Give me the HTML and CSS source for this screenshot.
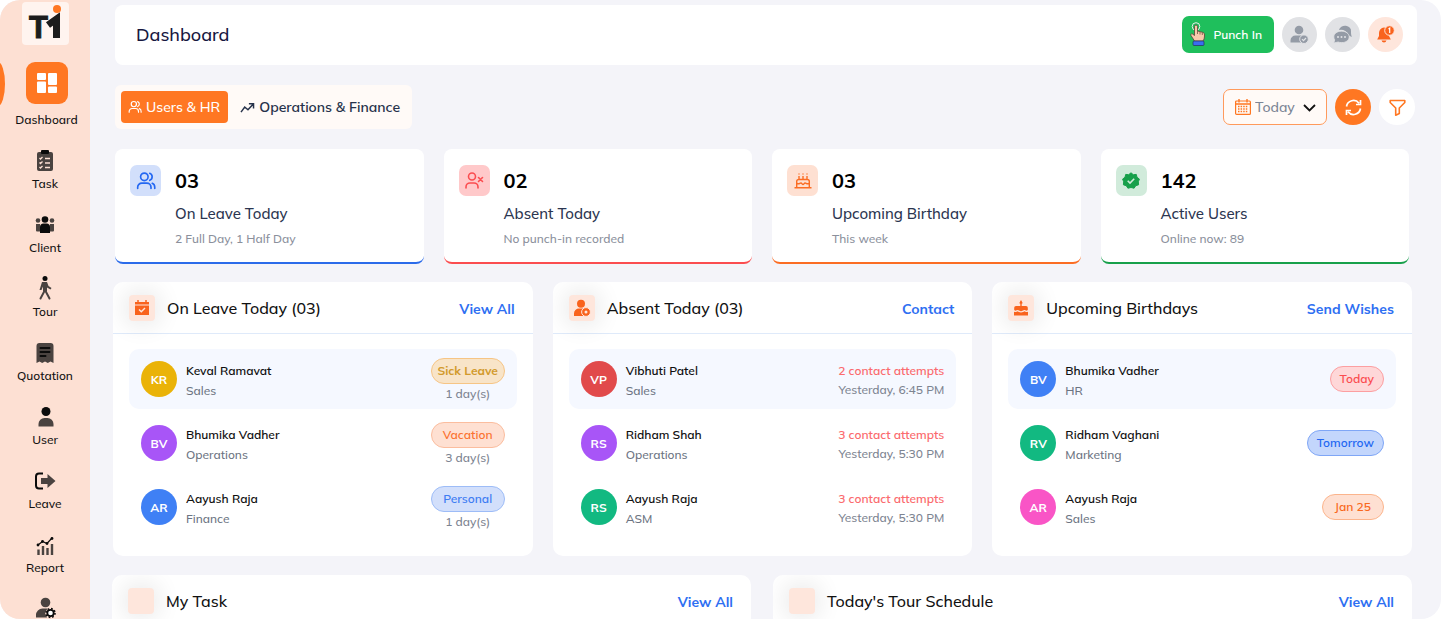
FILE: index.html
```html
<!DOCTYPE html>
<html lang="en">
<head>
    <meta charset="UTF-8">
    <meta name="viewport" content="width=device-width, initial-scale=1.0">
    <title>Dashboard</title>
    <link rel="stylesheet" href="styles.css">
</head>
<body>
    <!-- Icons used more than once -->
    <svg class="sprite" aria-hidden="true">
        <symbol id="icon-users" viewBox="0 0 24 24">
            <g fill="none" stroke="currentColor" stroke-width="2" stroke-linecap="round">
                <circle cx="10" cy="7" r="4.500"/>
                <path d="M2 21v-1.500a5 5 0 0 1 5-5h6a5 5 0 0 1 5 5V21M16.500 2.800a4.500 4.500 0 0 1 0 8.400M19.500 14.800a5 5 0 0 1 3 4.700V21"/>
            </g>
        </symbol>
    </svg>

    <div class="app">
        <aside class="sidebar">
            <a class="logo" href="#" aria-label="Home">
                <svg width="47" height="43" viewBox="0 0 47 43">
                    <text x="7" y="36" class="logo-text">T</text>
                    <!-- figure with a raised arm -->
                    <path d="M34.500 36V17l-8.500 6" fill="none" stroke="#1c1c1c" stroke-width="7"/>
                    <circle cx="35" cy="7" r="4" fill="#ff7722"/>
                </svg>
            </a>
            <nav>
                <a class="nav-item active" href="#">
                    <span class="nav-icon">
                        <svg width="22" height="22" viewBox="0 0 22 22" fill="#fff"><rect x="1" y="1" width="9" height="7" rx="1"/><rect x="1" y="9.500" width="9" height="11.500" rx="1"/><rect x="12" y="1" width="9" height="12" rx="1"/><rect x="12" y="14.500" width="9" height="6.500" rx="1"/></svg>
                    </span>
                    Dashboard
                </a>
                <a class="nav-item" href="#">
                    <svg width="22" height="22" viewBox="0 0 22 22"><rect x="3" y="2" width="16" height="19" rx="2" fill="#4a4340"/><rect x="7" y="0" width="8" height="4" rx="1" fill="#0b0b0b"/><path d="M5.500 8l1 1 2-2M5.500 12.500l1 1 2-2M5.500 17l1 1 2-2M11 8.500h5M11 13h5M11 17.500h5" stroke="#fde0d3" stroke-width="1.300" fill="none"/></svg>
                    Task
                </a>
                <a class="nav-item" href="#">
                    <svg width="22" height="22" viewBox="0 0 22 22"><g fill="#4a4340"><circle cx="4" cy="6.500" r="2.300"/><circle cx="18" cy="6.500" r="2.300"/><path d="M2 10h4v7.500H3a1 1 0 0 1-1-1zM16 10h4v6.500a1 1 0 0 1-1 1h-3z"/></g><circle cx="11" cy="5.500" r="3.300" fill="#0b0b0b"/><path d="M6 19v-6a3.500 3.500 0 0 1 3.500-3.500h3A3.500 3.500 0 0 1 16 13v6z" fill="#0b0b0b"/></svg>
                    Client
                </a>
                <a class="nav-item" href="#">
                    <svg width="22" height="24" viewBox="0 0 22 24"><circle cx="11" cy="2.500" r="2.500" fill="#0b0b0b"/><path d="M11 7v7l-4.500 8.500M11 14l4.500 8.500" stroke="#4a4340" stroke-width="2" fill="none" stroke-linecap="round"/><path d="M8 6h5l1.500 4 3 2-1 1.500-3.500-2v4H9v-5l-1.500 3.500H5.500z" fill="#4a4340"/></svg>
                    Tour
                </a>
                <a class="nav-item" href="#">
                    <svg width="22" height="22" viewBox="0 0 22 22"><path d="M2.500 4a3 3 0 0 1 3-3h11a3 3 0 0 1 3 3v17l-3-1.500-2.700 1.500-2.800-1.500L8.200 21l-2.700-1.500-3 1.500z" fill="#4a4340"/><path d="M6.500 6h9M6.500 10h9M6.500 14h5" stroke="#0b0b0b" stroke-width="2" stroke-linecap="round"/></svg>
                    Quotation
                </a>
                <a class="nav-item" href="#">
                    <svg width="22" height="22" viewBox="0 0 22 22"><circle cx="12" cy="5.500" r="4.500" fill="#0b0b0b"/><path d="M4.500 20.500V18a6 6 0 0 1 6-6h3a6 6 0 0 1 6 6v2.500z" fill="#4a4340"/></svg>
                    User
                </a>
                <a class="nav-item" href="#">
                    <svg width="22" height="22" viewBox="0 0 22 22"><path d="M9 3.500H5a3 3 0 0 0-3 3v9a3 3 0 0 0 3 3h4" stroke="#0b0b0b" stroke-width="2" fill="none"/><path d="M7 8h6.500V4l8 7-8 7v-4H7z" fill="#4a4340"/></svg>
                    Leave
                </a>
                <a class="nav-item" href="#">
                    <svg width="22" height="22" viewBox="0 0 22 22"><path d="M4.500 21v-5.500M9 21v-9M13.500 21v-7M18 21V10" stroke="#4a4340" stroke-width="2.400"/><path d="M4 11l4.500-3.500 4.500 2 5-5.500" stroke="#0b0b0b" stroke-width="1.200" fill="none"/><g fill="#0b0b0b"><circle cx="4" cy="11" r="1.400"/><circle cx="8.500" cy="7.500" r="1.400"/><circle cx="13" cy="9.500" r="1.400"/><circle cx="18" cy="4.500" r="1.400"/></g></svg>
                    Report
                </a>
                <a class="nav-item" href="#" aria-label="Account settings">
                    <svg width="22" height="22" viewBox="0 0 22 22"><circle cx="11.500" cy="5.500" r="4.800" fill="#4a4340"/><path d="M2 20.500V18a6.500 6.500 0 0 1 6.500-6.500h5L11 16l2 4.500z" fill="#4a4340"/><circle cx="16.500" cy="16" r="3.200" fill="#fff" stroke="#0b0b0b" stroke-width="1.800"/><circle cx="16.500" cy="16" r="4.500" fill="none" stroke="#0b0b0b" stroke-width="1.600" stroke-dasharray="1.700 1.830"/></svg>
                </a>
            </nav>
        </aside>

        <main>
            <header class="topbar">
                <h1>Dashboard</h1>
                <div class="topbar-actions">
                    <button class="punch" type="button">
                        <svg width="16" height="24" viewBox="0 0 16 24"><circle cx="6" cy="4.500" r="3.800" fill="none" stroke="#e9e9e9" stroke-width="1"/><path d="M4.500 4.500a1.500 1.500 0 0 1 3 0V9l5 1.300c1.500.400 2 1.200 2 2.700 0 3-.500 4.500-1.500 6h-8.500L1 13.500c-.500-1.500.500-2 1.500-1.500l2 1.500z" fill="#f8c9ab" stroke="#5b4334" stroke-width=".8"/><path d="M7.500 9v3M10 10v2.500M12.300 10.500v2.500" stroke="#5b4334" stroke-width=".7"/><rect x="3" y="19" width="11" height="4.500" rx="1" fill="#3a6df0" stroke="#22315c" stroke-width=".7"/></svg>
                        Punch In
                    </button>
                    <button class="round grey" type="button" aria-label="Attendance">
                        <svg width="19" height="19" viewBox="0 0 19 19"><circle cx="9" cy="5" r="4.300" fill="#949ba6"/><path d="M.500 17.500V15.500a5 5 0 0 1 5-5h6a5 5 0 0 1 4 2V17.500z" fill="#949ba6"/><circle cx="14" cy="14.200" r="4.300" fill="#949ba6" stroke="#e1e2e5" stroke-width="1"/><path d="M12 14.200l1.500 1.500 2.500-2.700" stroke="#e1e2e5" stroke-width="1.200" fill="none"/></svg>
                    </button>
                    <button class="round grey" type="button" aria-label="Messages">
                        <svg width="19" height="19" viewBox="0 0 19 19"><path d="M6 5a6 5 0 0 1 12 1.500c0 1.800 0 3 .800 5.500l-3-1.500A8 7 0 0 0 6 5z" fill="#949ba6"/><path d="M8.500 6.200c4.500 0 7.700 2.400 7.700 5.700s-3.200 5.700-7.500 5.700c-1.500 0-2.500-.200-3.500-.600L.800 18l.900-3.200A5.500 5.500 0 0 1 .800 12c0-3.500 3.300-5.800 7.700-5.800z" fill="#949ba6" stroke="#e1e2e5" stroke-width=".8"/><g fill="#e1e2e5"><circle cx="5" cy="12" r="1"/><circle cx="8.500" cy="12" r="1"/><circle cx="12" cy="12" r="1"/></g></svg>
                    </button>
                    <button class="round peach" type="button" aria-label="Notifications">
                        <svg width="19" height="19" viewBox="0 0 19 19"><path d="M8 2.500a5.500 5.500 0 0 0-5 5.500v3L1.200 14.500h13.600L13 11V8a5.500 5.500 0 0 0-5-5.500zM5.500 15.500a2.600 2.600 0 0 0 5 0z" fill="#f9631d"/><circle cx="13.500" cy="5.500" r="4.800" fill="#f9631d" stroke="#fee6dc" stroke-width="1"/><path d="M12.500 4l1.200-.800v4.800" stroke="#fff" stroke-width="1.200" fill="none"/></svg>
                    </button>
                </div>
            </header>

            <div class="toolbar">
                <div class="tabs">
                    <button class="tab active" type="button">
                        <svg width="14" height="14"><use href="#icon-users"/></svg>
                        Users &amp; HR
                    </button>
                    <button class="tab" type="button">
                        <svg width="15" height="13" viewBox="0 0 16 14" fill="none" stroke="currentColor" stroke-width="1.600"><path d="M1 12l4-5.500 3.500 3L14 3.500M9.500 3h5v5"/></svg>
                        Operations &amp; Finance
                    </button>
                </div>
                <div class="filters">
                    <div class="period">
                        <svg class="period-icon" width="16" height="16" viewBox="0 0 16 16"><rect x=".6" y="2" width="14.800" height="13.400" rx="1" fill="none" stroke="#ff7722" stroke-width="1.200"/><path d="M.6 5h14.800M4 0v3.500M12 0v3.500" stroke="#ff7722" stroke-width="1.400"/><path d="M3 7.500h10M3 10h10M3 12.500h10" stroke="#ff7722" stroke-width="1.500" stroke-dasharray="1.500 1.100"/></svg>
                        <select aria-label="Period">
                            <option>Today</option>
                            <option>This week</option>
                            <option>This month</option>
                        </select>
                        <svg class="period-arrow" width="13" height="8" viewBox="0 0 13 8"><path d="M1 1l5.500 5.500L12 1" fill="none" stroke="#111" stroke-width="1.800"/></svg>
                    </div>
                    <button class="round orange" type="button" aria-label="Refresh">
                        <svg width="17" height="17" viewBox="0 0 17 17" fill="none" stroke="#fff" stroke-width="1.700"><path d="M1.500 7.500a7 7 0 0 1 12.500-3.200M15.500 1v4.500H11M15.500 9.500A7 7 0 0 1 3 12.700M1.500 16v-4.500H6"/></svg>
                    </button>
                    <button class="round white" type="button" aria-label="Filter">
                        <svg width="17" height="17" viewBox="0 0 17 17" fill="none" stroke="#ff7722" stroke-width="1.600" stroke-linejoin="round"><path d="M1.200 1.500h14.600v2L10.300 9v5.500L6.700 16.200V9L1.200 3.500z"/></svg>
                    </button>
                </div>
            </div>

            <section class="stats">
                <article class="stat blue">
                    <span class="stat-icon"><svg width="20" height="20"><use href="#icon-users"/></svg></span>
                    <div>
                        <strong>03</strong>
                        <h2>On Leave Today</h2>
                        <p>2 Full Day, 1 Half Day</p>
                    </div>
                </article>
                <article class="stat red">
                    <span class="stat-icon"><svg width="20" height="20" viewBox="0 0 20 20" fill="none" stroke="currentColor" stroke-width="1.600" stroke-linecap="round"><circle cx="8" cy="5.500" r="3.500"/><path d="M2 17v-1a4 4 0 0 1 4-4h4a4 4 0 0 1 4 4v1M14.500 6.500l4 4M18.500 6.500l-4 4"/></svg></span>
                    <div>
                        <strong>02</strong>
                        <h2>Absent Today</h2>
                        <p>No punch-in recorded</p>
                    </div>
                </article>
                <article class="stat orange">
                    <span class="stat-icon"><svg width="18" height="18" viewBox="0 0 18 18" fill="none" stroke="currentColor" stroke-width="1.400"><path d="M.500 15.800h17M2.700 15.500V9.500a2 2 0 0 1 2-2h8.600a2 2 0 0 1 2 2v6M2.700 11c2 2 3 0 4.200 0s1.200 1.500 2.100 1.500S10 11 11.100 11s2.200 2 4.200 0M5 7V4M9 7V4M13 7V4M5 2.500v-1M9 2.500v-1M13 2.500v-1"/></svg></span>
                    <div>
                        <strong>03</strong>
                        <h2>Upcoming Birthday</h2>
                        <p>This week</p>
                    </div>
                </article>
                <article class="stat green">
                    <span class="stat-icon"><svg width="18" height="18" viewBox="0 0 18 18"><path d="M9 .800l2.300 1.900 3-.300.700 2.900 2.400 1.800L16.300 9.800l.300 3-2.900.900-1.600 2.500L9 15.500l-3.100.700-1.600-2.500-2.900-.900.300-3L.600 7.100 3 5.300l.700-2.900 3 .300z" fill="currentColor" stroke="currentColor" stroke-linejoin="round"/><path d="M5.700 8.800l2.300 2.300 4.200-4.300" fill="none" stroke="#d1ebdb" stroke-width="1.600"/></svg></span>
                    <div>
                        <strong>142</strong>
                        <h2>Active Users</h2>
                        <p>Online now: 89</p>
                    </div>
                </article>
            </section>

            <section class="panels">
                <article class="panel">
                    <header class="panel-head">
                        <span class="panel-icon"><svg width="16" height="16" viewBox="0 0 16 16"><path d="M1 2h14v2.500H1zM1 5.500h14V15H1z" fill="#f9631d"/><path d="M4 0v3.500M12 0v3.500" stroke="#f9631d" stroke-width="1.500"/><path d="M5 9.500l2.300 2.300L11 8" fill="none" stroke="#fee6dc" stroke-width="1.400"/></svg></span>
                        <h2>On Leave Today (03)</h2>
                        <a href="#">View All</a>
                    </header>
                    <ul class="people">
                        <li>
                            <span class="avatar yellow">KR</span>
                            <div class="person"><b>Keval Ramavat</b><span>Sales</span></div>
                            <div class="leave"><span class="badge amber">Sick Leave</span><span>1 day(s)</span></div>
                        </li>
                        <li>
                            <span class="avatar purple">BV</span>
                            <div class="person"><b>Bhumika Vadher</b><span>Operations</span></div>
                            <div class="leave"><span class="badge orange">Vacation</span><span>3 day(s)</span></div>
                        </li>
                        <li>
                            <span class="avatar blue">AR</span>
                            <div class="person"><b>Aayush Raja</b><span>Finance</span></div>
                            <div class="leave"><span class="badge blue">Personal</span><span>1 day(s)</span></div>
                        </li>
                    </ul>
                </article>

                <article class="panel">
                    <header class="panel-head">
                        <span class="panel-icon"><svg width="18" height="18" viewBox="0 0 18 18"><circle cx="8" cy="4.800" r="4" fill="#f9631d"/><path d="M1 17v-2.500a5 5 0 0 1 5-5h5V17z" fill="#f9631d"/><circle cx="13" cy="13" r="4.400" fill="#f9631d" stroke="#fee6dc"/><circle cx="13" cy="13" r="1.500" fill="#fee6dc"/></svg></span>
                        <h2>Absent Today (03)</h2>
                        <a href="#">Contact</a>
                    </header>
                    <ul class="people">
                        <li>
                            <span class="avatar red">VP</span>
                            <div class="person"><b>Vibhuti Patel</b><span>Sales</span></div>
                            <div class="attempts"><em>2 contact attempts</em><span>Yesterday, 6:45 PM</span></div>
                        </li>
                        <li>
                            <span class="avatar purple">RS</span>
                            <div class="person"><b>Ridham Shah</b><span>Operations</span></div>
                            <div class="attempts"><em>3 contact attempts</em><span>Yesterday, 5:30 PM</span></div>
                        </li>
                        <li>
                            <span class="avatar green">RS</span>
                            <div class="person"><b>Aayush Raja</b><span>ASM</span></div>
                            <div class="attempts"><em>3 contact attempts</em><span>Yesterday, 5:30 PM</span></div>
                        </li>
                    </ul>
                </article>

                <article class="panel">
                    <header class="panel-head">
                        <span class="panel-icon"><svg width="16" height="16" viewBox="0 0 16 16"><path d="M8 0l1.300 2.200a1.400 1.400 0 1 1-2.600 0zM7.300 4h1.400v2H13a1.800 1.800 0 0 1 1.800 1.800V10c-1.500 1.500-2.500 0-3.400 0S9.500 11.200 8 11.200 5.500 10 4.600 10s-1.900 1.500-3.400 0V7.800A1.800 1.800 0 0 1 3 6h4.300zM1 11.800c1.800.700 2.800 0 3.600-.500.900.500 1.800 1.200 3.400 1.200s2.500-.700 3.400-1.200c.800.500 1.800 1.200 3.600.500v3.700H1z" fill="#f9631d"/></svg></span>
                        <h2>Upcoming Birthdays</h2>
                        <a href="#">Send Wishes</a>
                    </header>
                    <ul class="people">
                        <li>
                            <span class="avatar blue">BV</span>
                            <div class="person"><b>Bhumika Vadher</b><span>HR</span></div>
                            <span class="badge red">Today</span>
                        </li>
                        <li>
                            <span class="avatar green">RV</span>
                            <div class="person"><b>Ridham Vaghani</b><span>Marketing</span></div>
                            <span class="badge royal">Tomorrow</span>
                        </li>
                        <li>
                            <span class="avatar pink">AR</span>
                            <div class="person"><b>Aayush Raja</b><span>Sales</span></div>
                            <span class="badge date">Jan 25</span>
                        </li>
                    </ul>
                </article>
            </section>

            <section class="panels wide">
                <article class="panel">
                    <header class="panel-head">
                        <span class="panel-icon"></span>
                        <h2>My Task</h2>
                        <a href="#">View All</a>
                    </header>
                </article>
                <article class="panel">
                    <header class="panel-head">
                        <span class="panel-icon"></span>
                        <h2>Today's Tour Schedule</h2>
                        <a href="#">View All</a>
                    </header>
                </article>
            </section>
        </main>
    </div>
</body>
</html>
```
FILE: styles.css
```css
* {
    box-sizing: border-box;
}
body {
    margin: 0;
    background-color: #fff;
    font-family: Mulish, Lato, sans-serif;
    font-size: 12px;
    color: #111;
}
h1, h2, p, ul {
    margin: 0;
    padding: 0;
    font-weight: 500;
}
a {
    color: inherit;
    text-decoration: none;
}
button, select {
    font-family: inherit;
    border: none;
    padding: 0;
    cursor: pointer;
}
svg {
    display: block;
    flex-shrink: 0;
}
.sprite {
    position: absolute;
    width: 0;
    height: 0;
}
.app {
    display: flex;
    height: 100vh;
    overflow: hidden;
    background-color: #f4f4f9;
    border-radius: 20px;
}

/* Sidebar */
.sidebar {
    flex: 0 0 90px;
    padding-top: 2px;
    background-color: #fde0d3;
}
.logo {
    display: block;
    width: 47px;
    margin: 0 auto 17px;
    background-color: #fff4ef;
    border-radius: 4px;
}
.logo-text {
    font-family: "Liberation Sans", sans-serif;
    font-size: 31px;
    font-weight: 700;
    fill: #1c1c1c;
    stroke: #1c1c1c;
    stroke-width: 1px;
}
.nav-item {
    position: relative;
    display: flex;
    flex-direction: column;
    align-items: center;
    justify-content: flex-end;
    gap: 4px;
    height: 64px;
    line-height: 16px;
    font-weight: 500;
}
.nav-item.active {
    gap: 8px;
    height: 66px;
    padding-left: 3px;
}
.nav-item.active::before {
    content: "";
    position: absolute;
    left: -9px;
    top: 0;
    width: 14px;
    height: 44px;
    background-color: #ff7722;
    border-radius: 50%;
}
.nav-icon {
    display: grid;
    place-items: center;
    width: 42px;
    height: 42px;
    background-color: #ff7722;
    border-radius: 9px;
}
.nav-item:last-child {
    justify-content: center;
}

/* Top bar */
main {
    flex: 1;
    min-width: 0;
    padding-top: 5px;
}
.topbar {
    display: flex;
    align-items: center;
    justify-content: space-between;
    height: 60px;
    margin: 0 24px 0 25px;
    padding: 0 14px 2px 21px;
    background-color: #fff;
    border-radius: 8px;
}
h1 {
    font-size: 18px;
    color: #17173f;
}
.topbar-actions, .filters {
    display: flex;
    align-items: center;
    gap: 8px;
}
.punch {
    display: flex;
    align-items: center;
    gap: 7px;
    height: 37px;
    padding: 0 12px 0 8px;
    background-color: #1fbf5c;
    border-radius: 7px;
    color: #fff;
    font-size: 12px;
    font-weight: 600;
}
.round {
    display: grid;
    place-items: center;
    width: 36px;
    height: 36px;
    border-radius: 50%;
}
.topbar .round {
    width: 35px;
    height: 35px;
}
.round.grey {
    background-color: #e1e2e5;
}
.round.peach {
    background-color: #fee6dc;
}
.round.orange {
    background-color: #ff7722;
}
.round.white {
    background-color: #fff;
}

/* Tabs and filters */
.toolbar {
    display: flex;
    align-items: center;
    justify-content: space-between;
    margin: 20px 26px 20px 25px;
}
.tabs {
    display: flex;
    padding: 6px;
    background-color: #fffaf7;
    border-radius: 6px;
}
.tab {
    display: flex;
    align-items: center;
    gap: 4px;
    height: 32px;
    padding: 0 6px 0 12px;
    background: none;
    border-radius: 4px;
    color: #26324b;
    font-size: 14px;
    font-weight: 600;
}
.tab.active {
    padding: 0 8px 0 7px;
    background-color: #ff7722;
    color: #fff;
    font-weight: 500;
}
.period {
    position: relative;
}
.period select {
    width: 104px;
    height: 36px;
    padding-left: 31px;
    appearance: none;
    background-color: #fffaf7;
    border: 1px solid #ff9a5c;
    border-radius: 7px;
    color: #7c8595;
    font-size: 14px;
    font-weight: 500;
}
.period-icon {
    position: absolute;
    left: 12px;
    top: 10px;
    pointer-events: none;
}
.period-arrow {
    position: absolute;
    right: 11px;
    top: 15px;
    pointer-events: none;
}

/* Stat cards */
.stats {
    display: grid;
    grid-template-columns: repeat(4, 1fr);
    gap: 20px;
    margin: 0 32px 18px 25px;
}
.stat {
    display: flex;
    align-items: flex-start;
    gap: 14px;
    height: 115px;
    padding: 16px 15px 0;
    background-color: #fff;
    border-bottom: 2px solid;
    border-radius: 8px;
}
.stat-icon {
    display: grid;
    place-items: center;
    width: 31px;
    height: 31px;
    border-radius: 7px;
}
.stat strong {
    display: block;
    font-size: 20px;
    line-height: 32px;
    color: #000;
}
.stat h2 {
    font-size: 15px;
    line-height: 34px;
    color: #2b3550;
}
.stat p {
    font-size: 12px;
    line-height: 16px;
    color: #8b909c;
}
.stat.blue {
    border-color: #2b6bea;
}
.stat.blue .stat-icon {
    background-color: #d2dffb;
    color: #2468f2;
}
.stat.red {
    border-color: #fb4d50;
}
.stat.red .stat-icon {
    background-color: #ffc9ca;
    color: #fb4d50;
}
.stat.orange {
    border-color: #fb6d24;
}
.stat.orange .stat-icon {
    background-color: #fee0d2;
    color: #fb6d24;
}
.stat.green {
    border-color: #17a04b;
}
.stat.green .stat-icon {
    background-color: #d1ebdb;
    color: #17a04b;
}

/* Panels */
.panels {
    display: grid;
    grid-template-columns: repeat(3, 1fr);
    gap: 20px;
    margin: 0 29px 19px 23px;
}
.panels.wide {
    grid-template-columns: repeat(2, 1fr);
    gap: 22px;
    margin-left: 22px;
}
.panel {
    background-color: #fff;
    border-radius: 10px;
    overflow: hidden;
}
.panel-head {
    display: flex;
    align-items: center;
    height: 52px;
    padding: 0 18px 0 16px;
    border-bottom: 1px solid #dfeafa;
}
.panel-icon {
    display: grid;
    place-items: center;
    width: 26px;
    height: 26px;
    margin-right: 12px;
    background-color: #fee6dc;
    border-radius: 4px;
    box-shadow: 0 0 24px 4px rgba(0, 0, 0, 0.09);
}
.panel-head h2 {
    flex: 1;
    font-size: 16px;
}
.panel-head a {
    padding-top: 2px;
    color: #2e6ff2;
    font-size: 14px;
    font-weight: 700;
}
.people {
    display: grid;
    gap: 4px;
    padding: 15px 16px 19px;
    list-style: none;
}
.people li {
    display: flex;
    align-items: center;
    gap: 9px;
    height: 60px;
    padding: 0 12px;
    border-radius: 10px;
}
.people li:first-child {
    background-color: #f5f8ff;
}
.avatar {
    display: grid;
    place-items: center;
    width: 36px;
    height: 36px;
    padding-top: 1px;
    border-radius: 50%;
    color: #fff;
    font-size: 12px;
    font-weight: 700;
}
.avatar.yellow {
    background-color: #eab308;
}
.avatar.purple {
    background-color: #a855f7;
}
.avatar.blue {
    background-color: #3f80f5;
}
.avatar.red {
    background-color: #e14a4b;
}
.avatar.green {
    background-color: #12b981;
}
.avatar.pink {
    background-color: #f955c6;
}
.person {
    flex: 1;
    padding-top: 4px;
    line-height: 20px;
}
.person b, .person span, .attempts em, .attempts span {
    display: block;
}
.person b {
    font-weight: 600;
}
.person span {
    color: #6c7482;
    font-weight: 500;
}
.leave {
    display: grid;
    justify-items: center;
    padding-top: 4px;
    line-height: 20px;
    color: #7d8491;
    font-weight: 500;
}
.leave .badge {
    width: 74px;
    padding: 0;
}
.attempts {
    padding-top: 2px;
    line-height: 19px;
    text-align: right;
    color: #7d8491;
}
.attempts em {
    font-style: normal;
    font-weight: 600;
    color: #fb6b6e;
}
.badge {
    height: 26px;
    padding: 0 9px;
    border: 1px solid;
    border-radius: 13px;
    font-weight: 600;
    line-height: 24px;
    text-align: center;
}
.badge.amber {
    background-color: #f8e4c8;
    border-color: #f6c585;
    color: #d29a2c;
    font-weight: 700;
}
.badge.orange {
    background-color: #fee0d2;
    border-color: #fbbd9e;
    color: #fb7433;
}
.badge.blue {
    background-color: #d2dffb;
    border-color: #9dbcf7;
    color: #3f7df3;
}
.badge.red {
    background-color: #fed7d8;
    border-color: #fc9fa1;
    color: #fb4d50;
}
.badge.royal {
    background-color: #c3d6fc;
    border-color: #7fa6f6;
    color: #2468f2;
}
.badge.date {
    padding: 0 12px;
    background-color: #fee0d2;
    border-color: #fbb48c;
    color: #f9691d;
}
```
